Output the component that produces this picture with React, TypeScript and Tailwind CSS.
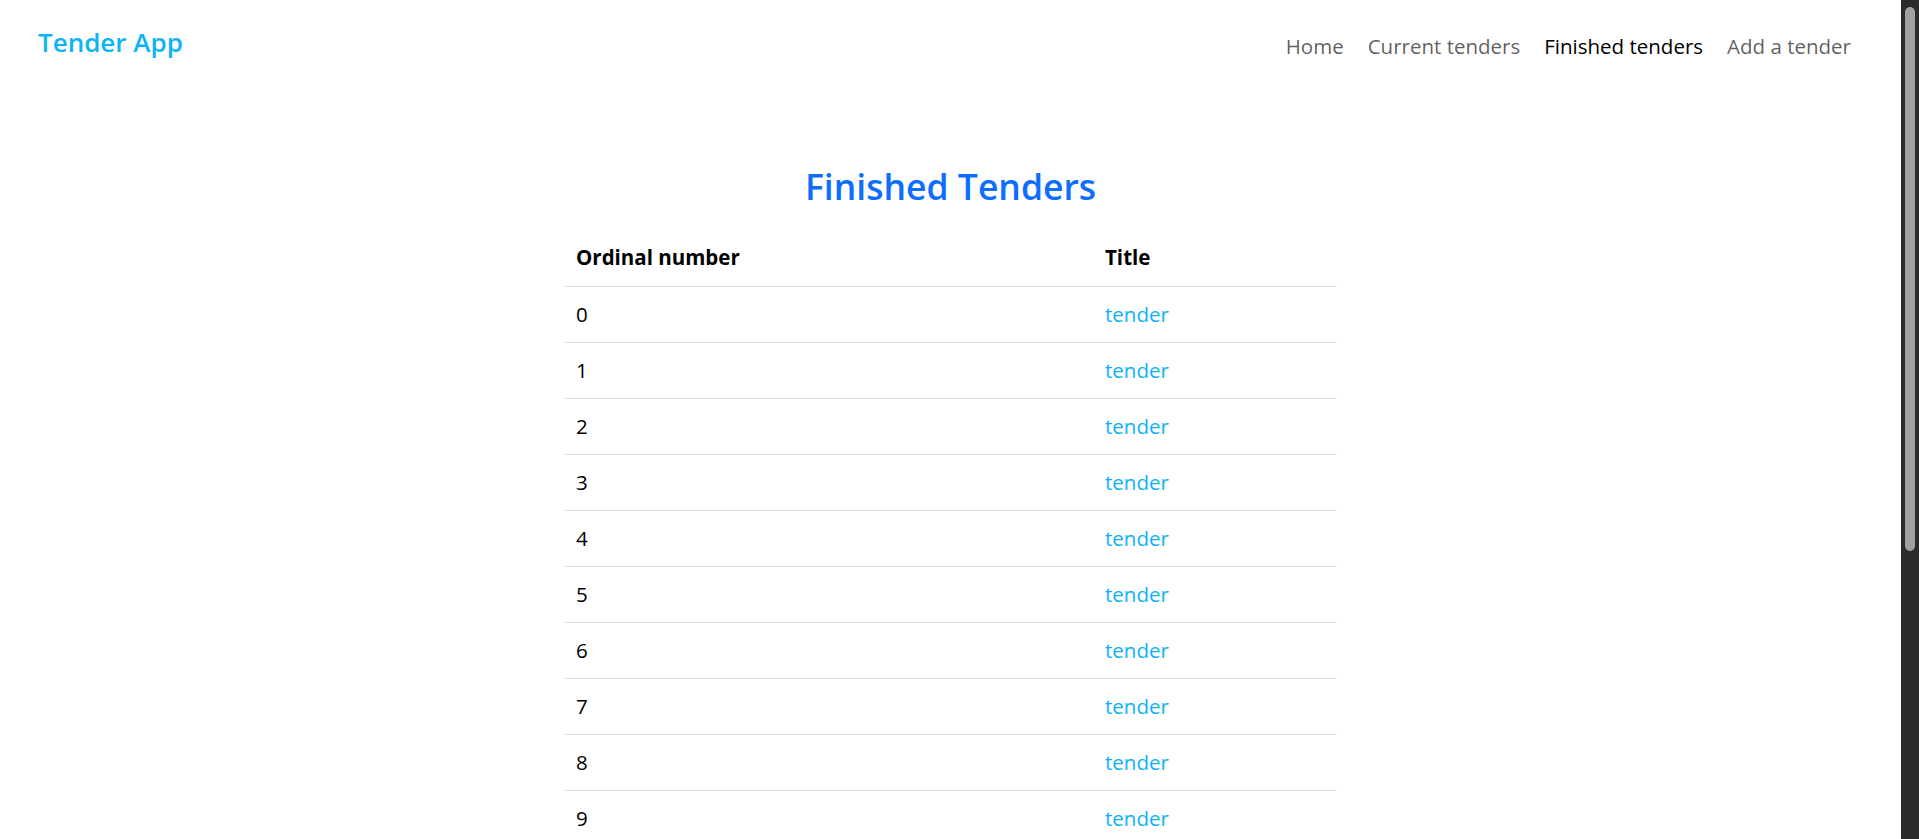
import React from 'react'

const navLinks = [
    { label: 'Home', active: false },
    { label: 'Current tenders', active: false },
    { label: 'Finished tenders', active: true },
    { label: 'Add a tender', active: false },
]

const tenders = Array.from({ length: 18 }, (_, i) => ({ id: i, title: 'tender' }))

export default function App() {
    return (
        <div className="flex h-screen overflow-hidden bg-white font-['Open_Sans',sans-serif]">
            <div className="flex-1 min-w-0 overflow-hidden">
                <header className="flex items-start justify-between pl-[38px] pr-[38px]">
                    <a href="#" className="mt-[25px] text-[26px] leading-[34px] font-semibold text-[#0db3f7]">
                        Tender App
                    </a>
                    <nav className="mt-[31px] flex">
                        {navLinks.map((link) => (
                            <a
                                key={link.label}
                                href="#"
                                className={`px-3 text-[20.5px] leading-[30px] ${link.active ? 'text-black' : 'text-black/65'}`}
                            >
                                {link.label}
                            </a>
                        ))}
                    </nav>
                </header>

                <main className="flex flex-col items-center">
                    <h1 className="mt-[101px] mb-[20px] text-[35.5px] leading-[48px] font-semibold text-[#0d6efd]">
                        Finished Tenders
                    </h1>

                    <table className="w-[773px] border-collapse text-[20.5px] text-black">
                        <thead>
                            <tr className="h-[56px] border-b border-[#dee2e6]">
                                <th className="w-[529px] px-3 text-left font-bold">Ordinal number</th>
                                <th className="px-3 text-left font-bold">Title</th>
                            </tr>
                        </thead>
                        <tbody>
                            {tenders.map((tender) => (
                                <tr key={tender.id} className="h-[56px] border-b border-[#dee2e6]">
                                    <td className="px-3">{tender.id}</td>
                                    <td className="px-3">
                                        <a href="#" className="text-[#0db3f7]">{tender.title}</a>
                                    </td>
                                </tr>
                            ))}
                        </tbody>
                    </table>
                </main>
            </div>

            {/* window scrollbar */}
            <div className="w-[18px] shrink-0 bg-[#2b2b2b] pt-[7px] flex justify-center">
                <div className="w-[10px] h-[544px] rounded-full bg-[#a0a0a0]" />
            </div>
        </div>
    )
}
